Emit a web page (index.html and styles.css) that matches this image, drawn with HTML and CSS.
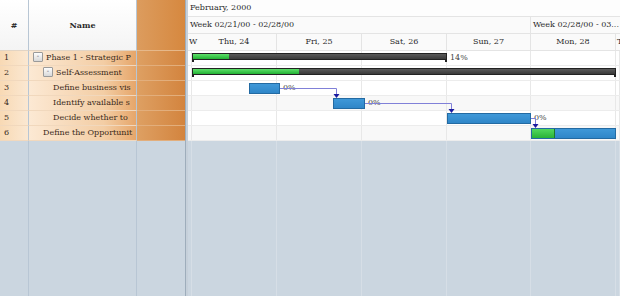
FILE: index.html
```html
<!DOCTYPE html>
<html>
  <head>
    <title>Gantt</title>
    <link rel="stylesheet" href="styles.css">
  </head>
  <body>
    <div class="gantt">
      <div class="grid">
        <div class="grid-head">
          <div class="hc hc-num">#</div>
          <div class="hc hc-name">Name</div>
          <div class="hc hc-extra"></div>
        </div>
        <div class="grid-row">
          <div class="c c-num">1</div>
          <div class="c c-name"><span class="exp">-</span>Phase 1 - Strategic P</div>
          <div class="c c-extra"></div>
        </div>
        <div class="grid-row">
          <div class="c c-num">2</div>
          <div class="c c-name lvl2"><span class="exp">-</span>Self-Assessment</div>
          <div class="c c-extra"></div>
        </div>
        <div class="grid-row">
          <div class="c c-num">3</div>
          <div class="c c-name lvl3">Define business vis</div>
          <div class="c c-extra"></div>
        </div>
        <div class="grid-row">
          <div class="c c-num">4</div>
          <div class="c c-name lvl3">Identify available s</div>
          <div class="c c-extra"></div>
        </div>
        <div class="grid-row">
          <div class="c c-num">5</div>
          <div class="c c-name lvl3">Decide whether to</div>
          <div class="c c-extra"></div>
        </div>
        <div class="grid-row">
          <div class="c c-num">6</div>
          <div class="c c-name lvl2b">Define the Opportunit</div>
          <div class="c c-extra"></div>
        </div>
        <div class="grid-fill">
          <div class="f f-num"></div>
          <div class="f f-name"></div>
          <div class="f f-extra"></div>
        </div>
      </div>

      <div class="splitter"></div>

      <div class="chart">
        <div class="tl-month">February, 2000</div>
        <div class="tl-week">
          <div class="wk wk-1">Week 02/21/00 - 02/28/00</div>
          <div class="wk wk-2">Week 02/28/00 - 03...</div>
        </div>
        <div class="days">
          <div class="day day-edge">W</div>
          <div class="day">Thu, 24</div>
          <div class="day">Fri, 25</div>
          <div class="day">Sat, 26</div>
          <div class="day">Sun, 27</div>
          <div class="day">Mon, 28</div>
          <div class="day day-edge">T</div>
        </div>

        <div class="body">
          <div class="row">
            <span></span><span></span><span></span><span></span><span></span><span></span><span></span>
            <div class="summary" style="left: 4px; width: 255px">
              <div class="done" style="width: 36px"></div>
            </div>
            <div class="pct" style="left: 262px">14%</div>
          </div>
          <div class="row">
            <span></span><span></span><span></span><span></span><span></span><span></span><span></span>
            <div class="summary" style="left: 4px; width: 424px">
              <div class="done" style="width: 106px"></div>
            </div>
          </div>
          <div class="row">
            <span></span><span></span><span></span><span></span><span></span><span></span><span></span>
            <div class="task" style="left: 61px; width: 31px"></div>
            <div class="pct" style="left: 95px">0%</div>
          </div>
          <div class="row alt">
            <span></span><span></span><span></span><span></span><span></span><span></span><span></span>
            <div class="task" style="left: 145px; width: 32px"></div>
            <div class="pct" style="left: 180px">0%</div>
          </div>
          <div class="row">
            <span></span><span></span><span></span><span></span><span></span><span></span><span></span>
            <div class="task" style="left: 259px; width: 84px"></div>
            <div class="pct" style="left: 346px">0%</div>
          </div>
          <div class="row alt">
            <span></span><span></span><span></span><span></span><span></span><span></span><span></span>
            <div class="task" style="left: 343px; width: 85px">
              <div class="done" style="width: 22px"></div>
            </div>
          </div>

          <svg class="links" width="432" height="90" viewBox="0 0 432 90">
            <path d="M92 37.5 H148.5 V43" />
            <polygon points="145.5,43 151.5,43 148.5,47" />
            <path d="M177 52.5 H263.5 V58" />
            <polygon points="260.5,58 266.5,58 263.5,62" />
            <path d="M343 67.5 H347.5 V73" />
            <polygon points="344.5,73 350.5,73 347.5,77" />
          </svg>
        </div>

        <div class="fill">
          <span></span><span></span><span></span><span></span><span></span><span></span><span></span>
        </div>
      </div>
    </div>
  </body>
</html>
```

FILE: styles.css
```css
body {
  margin: 0;
  background: #fff;
  font-family: "DejaVu Serif", serif;
  font-size: 8px;
  color: #2a2a2a;
}
.gantt {
  display: flex;
  height: 296px;
  overflow: hidden;
}

/* left grid */
.grid {
  width: 185px;
  display: flex;
  flex-direction: column;
  flex-shrink: 0;
}
.grid-head,
.grid-row,
.grid-fill {
  display: grid;
  grid-template-columns: 29px 108px 48px;
}
.grid-head {
  height: 51px;
}
.hc {
  display: flex;
  align-items: center;
  justify-content: center;
  font-weight: bold;
  color: #2a2a2a;
  background: linear-gradient(#ffffff, #f4f4f4);
  border-bottom: 1px solid #e2d4c4;
}
.hc-num,
.hc-name {
  border-right: 1px solid #b8c6d4;
}
.hc-extra {
  background: linear-gradient(to right, #dc9c5e, #d6883f);
  border-bottom: 1px solid #e6b88a;
}
.grid-row {
  height: 15px;
}
.c {
  box-sizing: border-box;
  height: 15px;
  line-height: 14px;
  border-bottom: 1px solid #f1d8bd;
  white-space: nowrap;
  overflow: hidden;
  color: #3a2a1a;
}
.c-num {
  padding-left: 4px;
  background: linear-gradient(to right, #f8d9b4, #fbe8d2);
  border-right: 1px solid #b8c6d4;
}
.c-name {
  padding-left: 4px;
  background: linear-gradient(to right, #fce9d4, #f3cda4 70%, #e6a66a);
  border-right: 1px solid #b8c6d4;
}
.c-name.lvl2 {
  padding-left: 14px;
}
.c-name.lvl2b {
  padding-left: 14px;
}
.c-name.lvl3 {
  padding-left: 24px;
}
.c-extra {
  background: linear-gradient(to right, #dea063, #d3843e);
  border-bottom-color: #e2ae7c;
}
.exp {
  display: inline-block;
  box-sizing: border-box;
  width: 10px;
  height: 10px;
  margin: 0 3px 0 0;
  vertical-align: middle;
  position: relative;
  top: -1px;
  border: 1px solid #9a9a9a;
  border-radius: 1px;
  background: linear-gradient(#fdfdfd, #d8d8d8);
  font-size: 7px;
  line-height: 7px;
  text-align: center;
  color: #555;
}
.grid-fill {
  flex: 1;
  background: #cbd6e0;
}
.f-num,
.f-name {
  border-right: 1px solid #b8c6d4;
}

.splitter {
  width: 3px;
  flex-shrink: 0;
  background: #c6d0da;
  border-left: 1px solid #9eadbb;
  box-sizing: border-box;
}

/* chart */
.chart {
  flex: 1;
  display: flex;
  flex-direction: column;
  overflow: hidden;
  background: #fff;
}
.tl-month,
.tl-week,
.days {
  height: 17px;
  box-sizing: border-box;
  border-bottom: 1px solid #e4e4e4;
  background: #fafafa;
  line-height: 16px;
}
.tl-month {
  padding-left: 2px;
  background: #fdfdfd;
}
.tl-week {
  display: flex;
}
.wk {
  padding-left: 2px;
  white-space: nowrap;
  overflow: hidden;
  box-sizing: border-box;
}
.wk-1 {
  width: 343px;
  border-right: 1px solid #e4e4e4;
}
.wk-2 {
  width: 89px;
}
.days,
.row,
.fill {
  display: grid;
  grid-template-columns: 4px 85px 85px 85px 84px 85px 4px;
}
.days {
  height: 17px;
}
.day {
  text-align: center;
  border-right: 1px solid #e4e4e4;
  white-space: nowrap;
}
.day-edge {
  text-align: left;
  padding-left: 1px;
  overflow: visible;
  border-right-color: transparent;
}
.days .day:first-child {
  position: relative;
  z-index: 1;
}

.body {
  position: relative;
}
.row {
  position: relative;
  height: 15px;
  box-sizing: border-box;
  border-bottom: 1px solid #ececec;
  background: #fff;
}
.row.alt {
  background: #f8f8f8;
}
.row span,
.fill span {
  border-right: 1px solid #e8e8e8;
}
.fill {
  flex: 1;
  background: #cbd6e0;
}
.fill span {
  border-right-color: #d6dee6;
}

.summary {
  position: absolute;
  top: 2px;
  height: 7px;
  box-sizing: border-box;
  background: linear-gradient(#5a5a5a, #3a3a3a);
  border: 1px solid #222;
}
.summary::before,
.summary::after {
  content: "";
  position: absolute;
  top: 5px;
  width: 2px;
  height: 3px;
  background: #222;
}
.summary::before {
  left: -1px;
}
.summary::after {
  right: -1px;
}
.summary .done {
  height: 100%;
  background: linear-gradient(#5ee06a, #22b234);
}
.task {
  position: absolute;
  top: 2px;
  height: 11px;
  box-sizing: border-box;
  background: linear-gradient(#3f98d8, #2f86c8);
  border: 1px solid #236aa2;
}
.task .done {
  height: 100%;
  background: linear-gradient(#52d85e, #28b238);
  border-right: 1px solid #1d7a2a;
}
.pct {
  position: absolute;
  top: 0;
  line-height: 14px;
  color: #444;
  white-space: nowrap;
}
.links {
  position: absolute;
  left: 0;
  top: 0;
}
.links path {
  fill: none;
  stroke: #8080d8;
  stroke-width: 1;
}
.links polygon {
  fill: #1a1aa0;
}
```
